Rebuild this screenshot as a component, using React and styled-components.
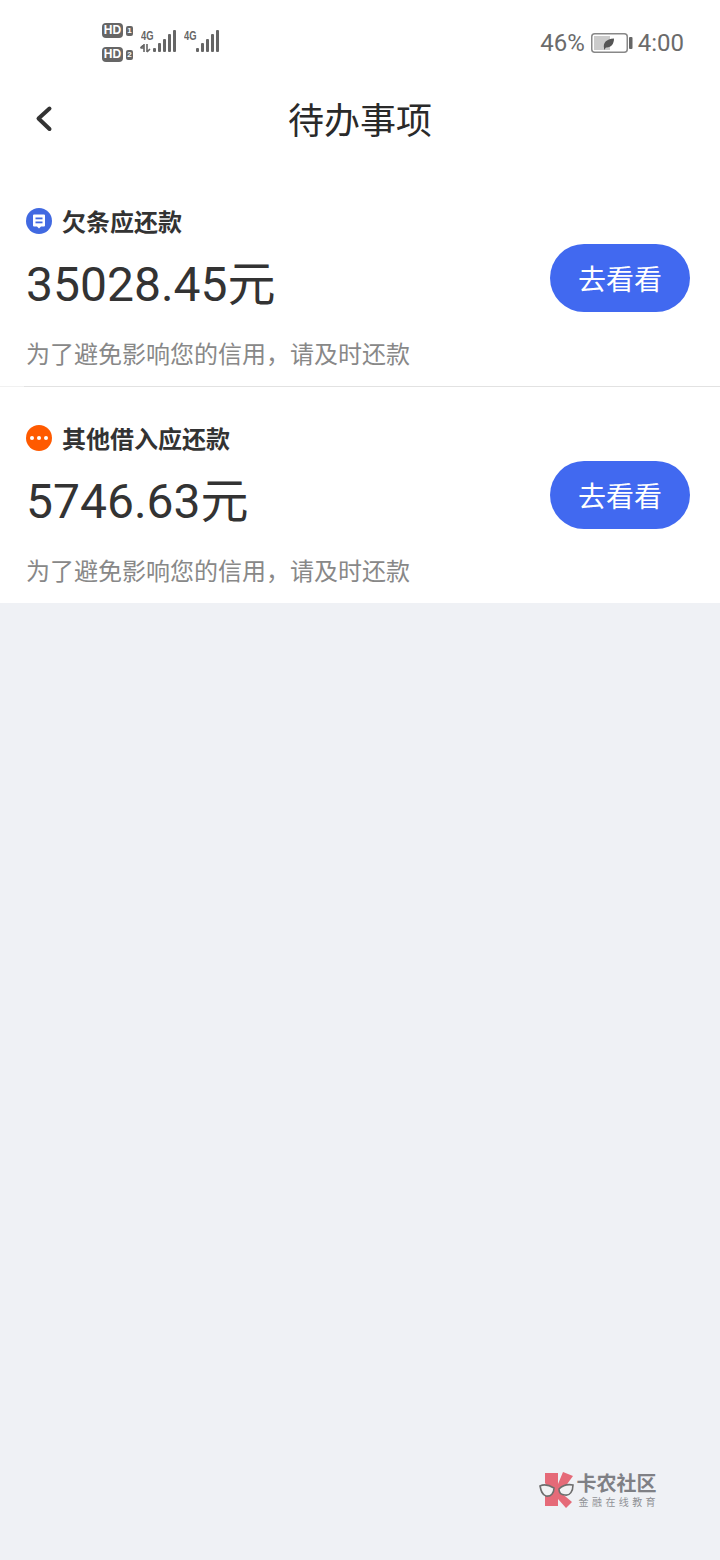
// Todo list page
import React from "react";
import styled, { createGlobalStyle } from "styled-components";

const GlobalStyle = createGlobalStyle`
  html, body {
    margin: 0;
    padding: 0;
    background: #eff1f5;
  }
  body {
    font-family: "Roboto", "Noto Sans CJK SC", sans-serif;
  }
`;

const Page = styled.div`
  width: 720px;
  height: 1560px;
  display: flex;
  flex-direction: column;
  background: #eff1f5;
  overflow: hidden;
`;

const Top = styled.div`
  background: #fff;
`;

// Status bar
const StatusBar = styled.div`
  height: 80px;
  box-sizing: border-box;
  padding: 23px 36px 0 102px;
  display: flex;
  justify-content: space-between;
  color: #666;
`;

const Signals = styled.div`
  display: flex;
  gap: 7px;
`;

const SimColumn = styled.div`
  display: flex;
  flex-direction: column;
  gap: 9px;
`;

const SimRow = styled.div`
  display: flex;
  align-items: center;
  gap: 3px;
  height: 15px;
`;

const HdBadge = styled.span`
  width: 21px;
  height: 15px;
  border-radius: 4px;
  background: #666;
  color: #fff;
  font: 700 12px/15px "Liberation Sans", sans-serif;
  text-align: center;
`;

const SimNumber = styled.span`
  width: 7px;
  height: 10px;
  border-radius: 2px;
  background: #666;
  color: #fff;
  font: 700 8px/10px "Liberation Sans", sans-serif;
  text-align: center;
`;

const SignalGroup = styled.div`
  position: relative;
  width: 36px;
  height: 24px;
  margin-top: 6px;
`;

const NetLabel = styled.span`
  position: absolute;
  left: 1px;
  top: 0;
  font: 700 13px/13px "Liberation Sans", sans-serif;
  color: #666;
  transform: scaleX(0.72);
  transform-origin: left center;
`;

const RightStatus = styled.div`
  display: flex;
  align-items: center;
  height: 40px;
  font-size: 24px;
  font-weight: 400;
  color: #6b6b6b;
`;

const Percent = styled.span`
  margin-right: 6px;
`;

const Time = styled.span`
  margin-left: 5px;
`;

// Header
const Header = styled.div`
  position: relative;
  height: 80px;
  display: flex;
  align-items: center;
  justify-content: center;
`;

const BackButton = styled.div`
  position: absolute;
  left: 34px;
  top: 24px;
  width: 20px;
  height: 30px;
`;

const Title = styled.h1`
  margin: -4px 0 0;
  font: 400 36px/80px "Noto Sans CJK SC", sans-serif;
  color: #2a2a2a;
`;

// Cards
const List = styled.div`
  padding-top: 10px;
`;

const Card = styled.div`
  position: relative;
  height: 217px;
  box-sizing: border-box;
  padding: 33px 30px 0 26px;
  ${(p) =>
    p.$divider &&
    `
    border-bottom: 1px solid #f1f1f1;
    &::after {
      content: "";
      position: absolute;
      left: 24px;
      right: 0;
      bottom: -1px;
      height: 1px;
      background: #e2e2e2;
    }
  `}
  & + & {
    height: 216px;
  }
`;

const CardTitle = styled.div`
  display: flex;
  align-items: center;
  gap: 10px;
  height: 36px;
  font: 700 24px/36px "Noto Sans CJK SC", sans-serif;
  color: #333;
`;

const Dot = styled.span`
  width: 26px;
  height: 26px;
  border-radius: 50%;
  background: ${(p) => p.$color};
  display: flex;
  align-items: center;
  justify-content: center;
`;

const Row = styled.div`
  display: flex;
  justify-content: space-between;
  align-items: center;
  height: 80px;
  margin-top: 8px;
`;

const Amount = styled.div`
  font: 400 48px/80px "Roboto", "Noto Sans CJK SC", sans-serif;
  color: #333;
  position: relative;
  top: -2px;
`;

const GoButton = styled.button`
  width: 140px;
  height: 68px;
  border: none;
  border-radius: 34px;
  background: #4169f0;
  color: #fff;
  font: 400 28px "Noto Sans CJK SC", sans-serif;
  padding: 0;
  position: relative;
  top: -9px;
`;

const Note = styled.div`
  margin-top: 8px;
  font: 400 24px/36px "Noto Sans CJK SC", sans-serif;
  color: #888;
`;

// Watermark
const Spacer = styled.div`
  flex: 1;
`;

const Watermark = styled.div`
  display: flex;
  justify-content: flex-end;
  align-items: center;
  gap: 2px;
  padding: 0 61px 51px 0;
`;

const MarkText = styled.div`
  display: flex;
  flex-direction: column;
  gap: 3px;
  color: #7f8085;
`;

const MarkName = styled.span`
  font: 700 20px/20px "Noto Sans CJK SC", sans-serif;
`;

const MarkSub = styled.span`
  font: 400 10px/11px "Noto Sans CJK SC", sans-serif;
  letter-spacing: 3.4px;
  margin-left: 2px;
  color: #909196;
`;

const Bars = ({ heights }) => (
  <svg width="36" height="24" viewBox="0 0 36 24" style={{ position: "absolute", left: 0, top: 0 }}>
    {heights.map((h, i) => (
      <rect key={i} x={13 + i * 5} y={23 - h} width="3" height={h} rx="1" fill="#666" />
    ))}
  </svg>
);

const SignalBlock = ({ arrows }) => (
  <SignalGroup>
    <NetLabel>4G</NetLabel>
    {arrows && (
      <svg width="14" height="10" viewBox="0 0 14 10" style={{ position: "absolute", left: 0, top: 14 }}>
        <path d="M0.5 5H4M4 1V9M0.5 5L4 1.5M7 1V9M7 9L10 6" stroke="#666" strokeWidth="1.6" fill="none" />
      </svg>
    )}
    <Bars heights={[4, 9, 13, 18, 22]} />
  </SignalGroup>
);

const Battery = () => (
  <svg width="42" height="22" viewBox="0 0 42 22">
    <rect x="0.75" y="1.75" width="35.5" height="18.5" rx="3" fill="none" stroke="#888" strokeWidth="1.5" />
    <rect x="3" y="4" width="16" height="14" fill="#cbcbcb" />
    <rect x="38" y="5" width="3.5" height="12" rx="1" fill="#666" />
    <path d="M13 16C12 11 15 7 23 6.5C23 12 20 16 15 15.5L13 18" fill="#555" />
  </svg>
);

const Task = ({ color, icon, title, amount, divider }) => (
  <Card $divider={divider}>
    <CardTitle>
      <Dot $color={color}>{icon}</Dot>
      {title}
    </CardTitle>
    <Row>
      <Amount>{amount}</Amount>
      <GoButton>去看看</GoButton>
    </Row>
    <Note>为了避免影响您的信用，请及时还款</Note>
  </Card>
);

const NoteIcon = () => (
  <svg width="16" height="16" viewBox="0 0 16 16">
    <path d="M3 1.5H13A1 1 0 0 1 14 2.5V12.5A1 1 0 0 1 13 13.5H10L8 15.5L6 13.5H3A1 1 0 0 1 2 12.5V2.5A1 1 0 0 1 3 1.5Z" fill="#fff" />
    <rect x="4.5" y="4.5" width="7" height="1.8" fill="#4169e1" />
    <rect x="4.5" y="8.5" width="7" height="1.8" fill="#4169e1" />
  </svg>
);

const MoreIcon = () => (
  <svg width="20" height="6" viewBox="0 0 20 6">
    <circle cx="3" cy="3" r="2" fill="#fff" />
    <circle cx="10" cy="3" r="2" fill="#fff" />
    <circle cx="17" cy="3" r="2" fill="#fff" />
  </svg>
);

const Logo = () => (
  <svg width="36" height="38" viewBox="0 0 36 38">
    <path d="M6 2H19V13L24 1L34 5L26 16L20 20L33 31L27 37L19 28V35H6V24L10 18L6 12Z" fill="#e56a78" />
    <path d="M1 15C5 13 10 14 15 17C15 22 12 26 7 25C3 24 2 20 1 15Z" fill="#f1f2f4" stroke="#6e6e6e" strokeWidth="1.6" />
    <path d="M20 18C24 14 29 13 34 14C34 20 31 25 26 24C22 24 20 22 20 18Z" fill="#f1f2f4" stroke="#6e6e6e" strokeWidth="1.6" />
  </svg>
);

const App = () => (
  <Page>
    <GlobalStyle />
    <Top>
      <StatusBar>
        <Signals>
          <SimColumn>
            <SimRow>
              <HdBadge>HD</HdBadge>
              <SimNumber>1</SimNumber>
            </SimRow>
            <SimRow>
              <HdBadge>HD</HdBadge>
              <SimNumber>2</SimNumber>
            </SimRow>
          </SimColumn>
          <SignalBlock arrows />
          <SignalBlock />
        </Signals>
        <RightStatus>
          <Percent>46%</Percent>
          <Battery />
          <Time>4:00</Time>
        </RightStatus>
      </StatusBar>
      <Header>
        <BackButton>
          <svg width="20" height="30" viewBox="0 0 20 30">
            <path
              d="M15.5 4.5L4.5 14.5L15.5 25"
              fill="none"
              stroke="#333"
              strokeWidth="4"
              strokeLinecap="round"
              strokeLinejoin="round"
            />
          </svg>
        </BackButton>
        <Title>待办事项</Title>
      </Header>
      <List>
        <Task
          divider
          color="#4169e1"
          icon={<NoteIcon />}
          title="欠条应还款"
          amount="35028.45元"
        />
        <Task
          color="#ff5a00"
          icon={<MoreIcon />}
          title="其他借入应还款"
          amount="5746.63元"
        />
      </List>
    </Top>
    <Spacer />
    <Watermark>
      <Logo />
      <MarkText>
        <MarkName>卡农社区</MarkName>
        <MarkSub>金融在线教育</MarkSub>
      </MarkText>
    </Watermark>
  </Page>
);

export default App;
